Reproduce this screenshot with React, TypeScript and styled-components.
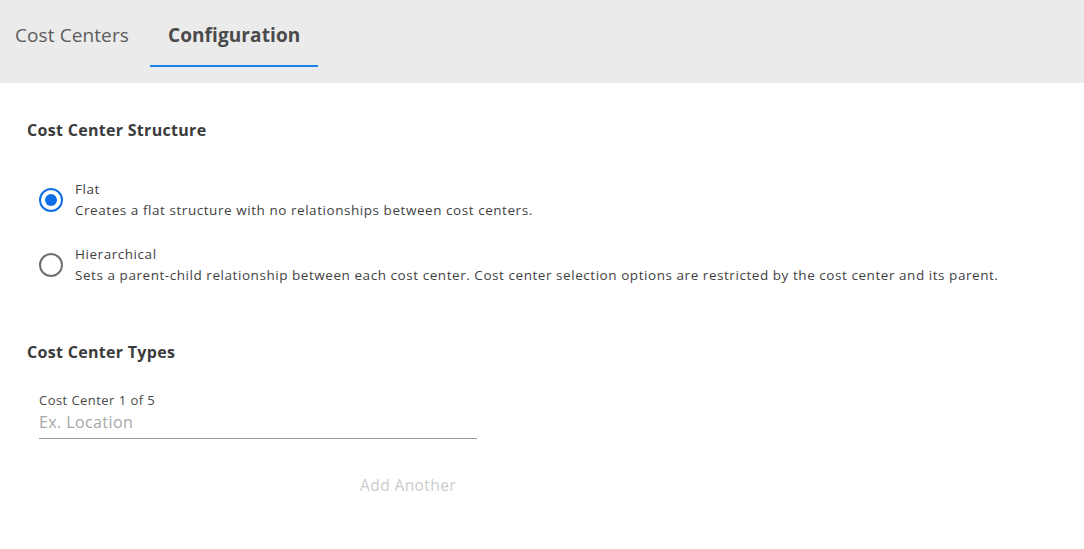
import React, { useState } from "react";
import styled, { createGlobalStyle } from "styled-components";

const GlobalStyle = createGlobalStyle`
  html, body {
    margin: 0;
    padding: 0;
    background: #ffffff;
    font-family: "Open Sans", "Liberation Sans", sans-serif;
    color: #3d3d3d;
  }
`;

const TabBar = styled.div`
  height: 83px;
  background: #ebebeb;
  display: flex;
  align-items: flex-start;
`;

const Tab = styled.button<{ active?: boolean }>`
  border: none;
  background: transparent;
  font-family: inherit;
  font-size: 19px;
  letter-spacing: 0.1px;
  font-weight: ${(p) => (p.active ? 700 : 400)};
  color: ${(p) => (p.active ? "#4a4a4a" : "#5c5c5c")};
  padding: 4px 18px 0;
  height: 67px;
  display: flex;
  align-items: center;
  border-bottom: 2px solid ${(p) => (p.active ? "#1a7fe8" : "transparent")};
  cursor: pointer;
  &:first-child {
    padding-left: 15px;
    margin-right: 3px;
  }
`;

const Content = styled.div`
  padding: 36px 27px 0;
`;

const SectionTitle = styled.h2`
  margin: 0;
  font-size: 16px;
  letter-spacing: 0.3px;
  font-weight: 700;
  color: #3b3b3b;
  line-height: 22px;
`;

const RadioList = styled.div`
  margin-top: 38px;
  display: flex;
  flex-direction: column;
  gap: 23px;
`;

const RadioRow = styled.label`
  display: flex;
  align-items: center;
  gap: 12px;
  cursor: pointer;
`;

const RadioCircle = styled.span<{ checked?: boolean }>`
  width: 20px;
  height: 20px;
  border-radius: 50%;
  border: 2px solid ${(p) => (p.checked ? "#0f6fe6" : "#707070")};
  flex-shrink: 0;
  margin-left: 12px;
  display: flex;
  align-items: center;
  justify-content: center;
  &::after {
    content: "";
    width: 12px;
    height: 12px;
    border-radius: 50%;
    background: ${(p) => (p.checked ? "#0f6fe6" : "transparent")};
  }
`;

const RadioText = styled.div`
  display: flex;
  flex-direction: column;
  font-size: 13.5px;
  letter-spacing: 0.55px;
  line-height: 21px;
  color: #3f3f3f;
`;

const TypesSection = styled.div`
  margin-top: 55px;
`;

const Field = styled.div`
  margin: 28px 0 0 12px;
  width: 438px;
  display: flex;
  flex-direction: column;
`;

const FieldLabel = styled.label`
  font-size: 13px;
  letter-spacing: 0.45px;
  line-height: 18px;
  color: #4a4a4a;
`;

const FieldInput = styled.input`
  border: none;
  border-bottom: 1px solid #999999;
  outline: none;
  padding: 2px 0 5px;
  font-family: inherit;
  font-size: 16px;
  letter-spacing: 0.4px;
  color: #3d3d3d;
  background: transparent;
  &::placeholder {
    color: #a8a8a8;
  }
`;

const AddButton = styled.button`
  align-self: flex-end;
  margin: 33px 15px 0 0;
  border: none;
  background: transparent;
  font-family: inherit;
  font-size: 15.5px;
  letter-spacing: 0.4px;
  color: #cccccc;
  padding: 2px 6px;
  cursor: default;
`;

const options = [
  {
    id: "flat",
    label: "Flat",
    desc: "Creates a flat structure with no relationships between cost centers.",
  },
  {
    id: "hier",
    label: "Hierarchical",
    desc: "Sets a parent-child relationship between each cost center. Cost center selection options are restricted by the cost center and its parent.",
  },
];

export default function App() {
  const [selected, setSelected] = useState("flat");
  return (
    <>
      <GlobalStyle />
      <TabBar>
        <Tab>Cost Centers</Tab>
        <Tab active>Configuration</Tab>
      </TabBar>
      <Content>
        <SectionTitle>Cost Center Structure</SectionTitle>
        <RadioList>
          {options.map((o) => (
            <RadioRow key={o.id} onClick={() => setSelected(o.id)}>
              <RadioCircle checked={selected === o.id} />
              <RadioText>
                <span>{o.label}</span>
                <span>{o.desc}</span>
              </RadioText>
            </RadioRow>
          ))}
        </RadioList>
        <TypesSection>
          <SectionTitle>Cost Center Types</SectionTitle>
          <Field>
            <FieldLabel>Cost Center 1 of 5</FieldLabel>
            <FieldInput placeholder="Ex. Location" />
            <AddButton>Add Another</AddButton>
          </Field>
        </TypesSection>
      </Content>
    </>
  );
}
